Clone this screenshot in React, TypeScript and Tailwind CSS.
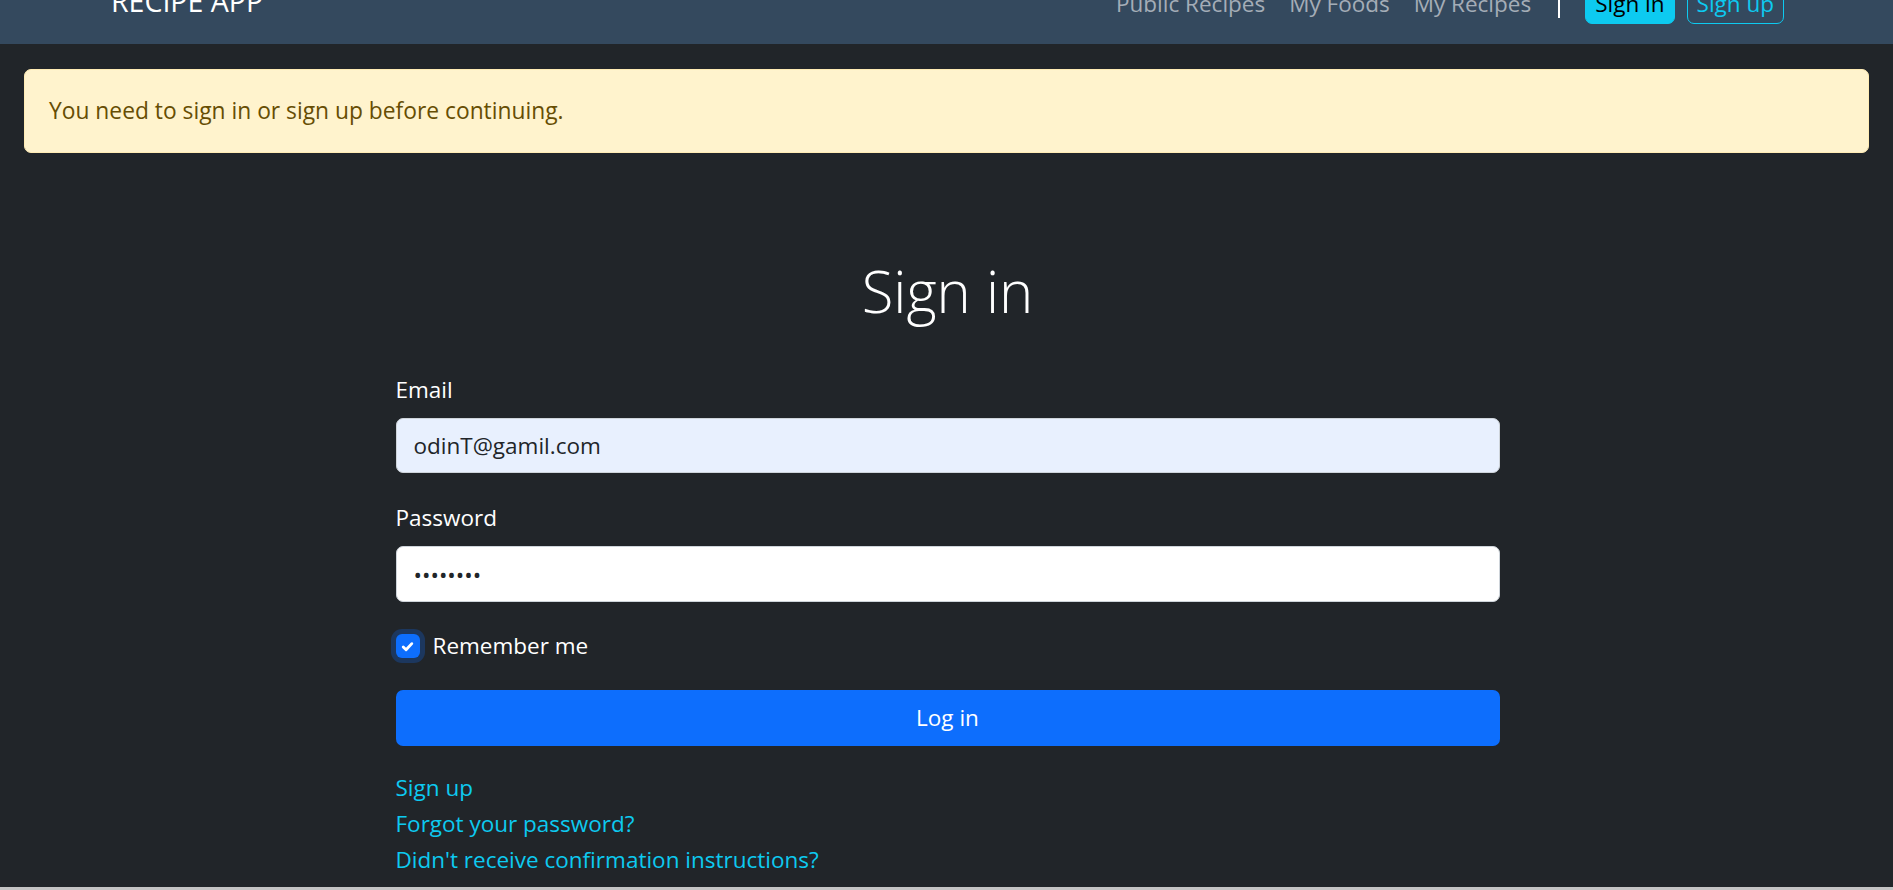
import React from 'react';

const navLinks = ['Public Recipes', 'My Foods', 'My Recipes'];

const Navbar = () => (
  <nav className="h-[44px] overflow-hidden bg-[#34495e] pl-[111px] pr-[109px]">
    <div className="-mt-[17px] flex items-baseline justify-between">
      <a className="text-[28.5px] leading-[36px] text-white">RECIPE APP</a>
      <div className="flex items-baseline">
        <ul className="flex items-baseline gap-[24px]">
          {navLinks.map((label) => (
            <li key={label}>
              <a className="text-[22.5px] leading-[36px] text-[#a4adb7]">{label}</a>
            </li>
          ))}
        </ul>
        <span className="ml-[27px] mr-[25px] h-[34px] w-[2px] self-start bg-white" />
        <div className="flex items-baseline gap-[12px]">
          <button className="rounded-[7px] border border-[#0dcaf0] bg-[#0dcaf0] px-[9px] py-[5px] text-[22.5px] leading-[28px] text-black">
            Sign in
          </button>
          <button className="rounded-[7px] border border-[#0dcaf0] px-[9px] py-[5px] text-[22.5px] leading-[28px] text-[#0dcaf0]">
            Sign up
          </button>
        </div>
      </div>
    </div>
  </nav>
);

const SignInForm = () => (
  <div className="mx-auto w-[1104px] translate-x-[1px]">
    <h1 className="mt-[104px] h-[67px] text-center text-[58px] font-light leading-[67px] text-white">Sign in</h1>

    <label className="mt-[48px] block text-[22.5px] leading-[36px] text-white">Email</label>
    <input
      type="email"
      readOnly
      value="odinT@gamil.com"
      className="mt-[10px] block h-[55px] w-full rounded-[7px] border border-[#ced4da] bg-[#e8f0fe] px-[17px] text-[22.5px] text-[#212529] outline-none"
    />

    <label className="mt-[27px] block text-[22.5px] leading-[36px] text-white">Password</label>
    <input
      type="password"
      readOnly
      value="password"
      className="mt-[10px] block h-[56px] w-full rounded-[7px] border border-[#ced4da] bg-white px-[17px] text-[22.5px] text-[#212529] outline-none"
    />

    <div className="mt-[26px] flex h-[36px] items-center">
      <span className="flex h-[24px] w-[24px] items-center justify-center rounded-[6px] bg-[#0d6efd] ring-[5px] ring-[#1c375e]">
        <svg viewBox="0 0 20 20" className="h-[19px] w-[19px]">
          <path d="M5.5 10.5l3 3 6-6.5" fill="none" stroke="white" strokeWidth="3" strokeLinecap="round" strokeLinejoin="round" />
        </svg>
      </span>
      <span className="ml-[13px] text-[22.5px] leading-[36px] text-white">Remember me</span>
    </div>

    <button className="mt-[26px] block h-[56px] w-full rounded-[7px] bg-[#0d6efd] text-[22.5px] text-white">Log in</button>

    <div className="mt-[24px] text-[22.5px] leading-[36px] text-[#0dcaf0]">
      <a className="block">Sign up</a>
      <a className="block">Forgot your password?</a>
      <a className="block">Didn't receive confirmation instructions?</a>
    </div>
  </div>
);

export default function App() {
  return (
    <div className="flex h-[890px] flex-col overflow-hidden bg-[#212529] font-['Open_Sans','Noto_Sans',sans-serif]">
      <Navbar />
      <div className="mx-[24px] mt-[25px] flex h-[84px] items-center rounded-[7px] border border-[#ffecb5] bg-[#fff3cd] px-[24px] text-[22.8px] text-[#664d03]">
        You need to sign in or sign up before continuing.
      </div>
      <SignInForm />
      <div className="flex-1" />
      <div className="h-[3px] bg-[#c4c4c4]" />
    </div>
  );
}
